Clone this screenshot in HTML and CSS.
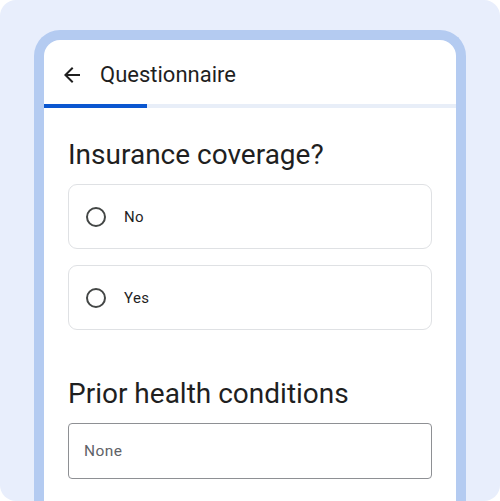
FILE: index.html
```html
<!DOCTYPE html>
<html lang="en">
<head>
<meta charset="utf-8">
<title>Questionnaire</title>
<link rel="stylesheet" href="styles.css">
</head>
<body>
<div class="stage">
  <div class="phone">
    <header class="topbar">
      <svg class="back" viewBox="0 0 24 24" width="24" height="24" aria-hidden="true"><path d="M20 11H7.83l5.59-5.59L12 4l-8 8 8 8 1.41-1.41L7.83 13H20v-2z"/></svg>
      <span class="title">Questionnaire</span>
    </header>
    <div class="progress"><div class="progress-fill" style="width:25%"></div></div>
    <main class="content">
      <section class="question first">
        <h2 class="q-title">Insurance coverage?</h2>
        <div class="options">
          <label class="option"><span class="radio"></span><span class="opt-label">No</span></label>
          <label class="option"><span class="radio"></span><span class="opt-label">Yes</span></label>
        </div>
      </section>
      <section class="question">
        <h2 class="q-title">Prior health conditions</h2>
        <div class="field"><span class="placeholder">None</span></div>
      </section>
    </main>
  </div>
</div>
</body>
</html>
```

FILE: styles.css
```css
* { box-sizing: border-box; }
html, body { margin: 0; padding: 0; background: #ffffff; }
body { font-family: Roboto, "Noto Sans", Arial, sans-serif; color: #1f1f1f; }

.stage {
  width: 500px;
  height: 501px;
  border-radius: 16px;
  background: #e8eefc;
  overflow: hidden;
  padding: 30px 34px 0 34px;
}

.phone {
  height: 520px;
  background: #ffffff;
  border: 10px solid #b4cbf1;
  border-bottom: none;
  border-radius: 26px 26px 0 0;
}

.topbar {
  height: 64px;
  padding: 6px 0 0 16px;
  display: flex;
  align-items: center;
}
.back { width: 24px; height: 24px; fill: #1f1f1f; flex: none; }
.title {
  margin-left: 16px;
  font-size: 22px;
  line-height: 28px;
  color: #1f1f1f;
}

.progress { height: 4px; background: #e8eef8; }
.progress-fill { height: 4px; background: #0b57d0; }

.content { padding: 0 24px; }

.question { margin-top: 46px; }
.question.first { margin-top: 29px; }

.q-title {
  margin: 0 0 11px 0;
  font-size: 28px;
  line-height: 36px;
  font-weight: 400;
  color: #1f1f1f;
}

.options { display: flex; flex-direction: column; gap: 16px; }

.option {
  height: 65px;
  border: 1px solid #dfe1e4;
  border-radius: 9px;
  display: flex;
  align-items: center;
  padding-left: 17px;
}
.radio {
  width: 20px;
  height: 20px;
  border: 2px solid #444746;
  border-radius: 50%;
  flex: none;
}
.opt-label {
  margin-left: 18px;
  font-size: 15px;
  letter-spacing: 0.4px;
  color: #1f1f1f;
}

.field {
  height: 56px;
  border: 1px solid #8e9094;
  border-radius: 4px;
  display: flex;
  align-items: center;
  padding-left: 15px;
}
.placeholder {
  font-size: 15.5px;
  letter-spacing: 0.4px;
  color: #5f6368;
}
```
